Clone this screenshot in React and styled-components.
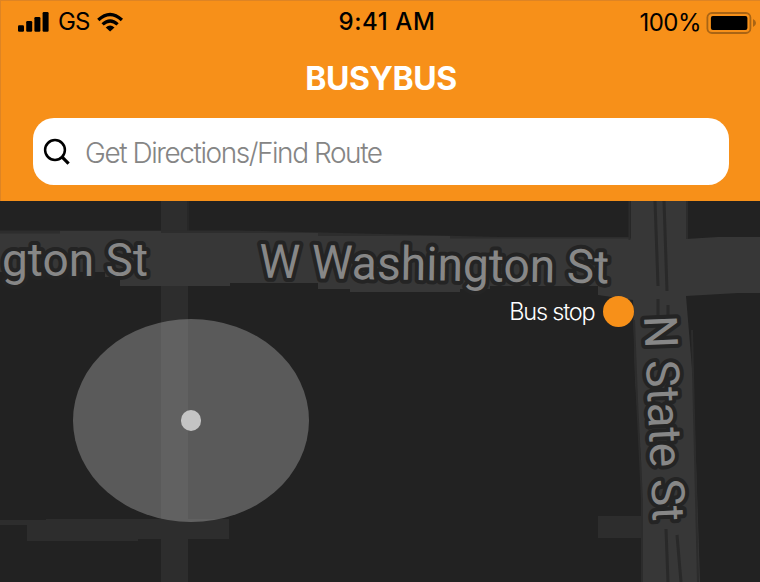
import React from "react";
import styled, { createGlobalStyle } from "styled-components";

const Global = createGlobalStyle`
  * { box-sizing: border-box; }
  body { margin: 0; background: #222; }
`;

const Screen = styled.div`
  width: 760px;
  height: 582px;
  display: flex;
  flex-direction: column;
  overflow: hidden;
  font-family: Inter, "Liberation Sans", sans-serif;
`;

const Header = styled.header`
  height: 201px;
  flex: none;
  display: flex;
  flex-direction: column;
  background: #f79019;
  box-shadow: inset 1px 1px 0 #de8424;
`;

const StatusBar = styled.div`
  height: 43px;
  display: grid;
  grid-template-columns: 1fr auto 1fr;
  color: #000;
  white-space: nowrap;
`;

const Carrier = styled.div`
  display: flex;
  align-items: flex-start;
  padding-left: 18px;
`;

const CarrierName = styled.span`
  font-size: 24px;
  line-height: 30px;
  font-weight: 400;
  letter-spacing: -0.9px;
  margin: 7px 7px 0 9px;
`;

const Clock = styled.time`
  font-size: 24px;
  line-height: 30px;
  font-weight: 500;
  letter-spacing: 0.6px;
  padding: 7px 0 0 14px;
`;

const Power = styled.div`
  display: flex;
  justify-content: flex-end;
  align-items: flex-start;
  padding-right: 3px;
`;

const PowerLevel = styled.span`
  font-size: 24px;
  line-height: 30px;
  letter-spacing: -0.5px;
  margin: 8px 5px 0 0;
`;

const StatusIcon = styled.svg`
  margin-top: 12px;
  flex: none;
`;

const Title = styled.h1`
  margin: 16px 0 0 2px;
  height: 40px;
  line-height: 40px;
  text-align: center;
  color: #fff;
  font-size: 32px;
  font-weight: 700;
  letter-spacing: -0.4px;
`;

const SearchBar = styled.div`
  margin: 19px 31px 0 32.5px;
  height: 67px;
  border-radius: 21px;
  background: #fff;
  display: flex;
  align-items: center;
  padding-left: 10.5px;
  gap: 14px;
`;

const Placeholder = styled.span`
  font-size: 28px;
  line-height: 34px;
  margin-top: 2px;
  font-weight: 300;
  letter-spacing: -1.44px;
  color: #858585;
`;

const MapView = styled.main`
  position: relative;
  flex: 1;
  background: #222;
`;

const MapCanvas = styled.svg`
  display: block;
`;

const StreetLabel = styled.text`
  font-family: Roboto, sans-serif;
  font-size: ${(p) => p.$size}px;
  fill: #878787;
  stroke: #242424;
  stroke-width: 8px;
  stroke-linejoin: round;
  paint-order: stroke;
`;

const LocationRange = styled.div`
  position: absolute;
  left: 73px;
  top: 118px;
  width: 236px;
  height: 203px;
  border-radius: 50%;
  background: rgba(196, 196, 196, 0.345);
  display: grid;
  place-items: center;
`;

const LocationDot = styled.div`
  width: 20.5px;
  height: 20.5px;
  border-radius: 50%;
  background: #c4c4c4;
`;

const StopMarker = styled.div`
  position: absolute;
  right: 126px;
  top: 95px;
  display: flex;
  align-items: center;
  gap: 8.5px;
`;

const StopName = styled.span`
  color: #fff;
  font-size: 23.5px;
  line-height: 30px;
  font-weight: 300;
  letter-spacing: -1.2px;
  white-space: nowrap;
`;

const StopDot = styled.span`
  width: 31px;
  height: 31px;
  border-radius: 50%;
  background: #f79019;
`;

function Signal() {
  return (
    <StatusIcon width="31" height="20" viewBox="0 0 31 20">
      <rect x="0" y="13.2" width="6" height="6.5" rx="1.2" />
      <rect x="8.2" y="9" width="6" height="10.7" rx="1.2" />
      <rect x="16.4" y="5" width="6" height="14.7" rx="1.2" />
      <rect x="24.6" y="0" width="6" height="19.7" rx="1.2" />
    </StatusIcon>
  );
}

function Wifi() {
  return (
    <StatusIcon width="28" height="20" viewBox="0 0 28 20">
      <g fill="none" stroke="#000" strokeWidth="3.3">
        <path d="M1.3 8 Q13.100 -3 24.900 8" />
        <path d="M5.6 12.4 Q13.100 5.5 20.600 12.4" />
      </g>
      <path d="M8.700 15.4 Q13.100 11.400 17.500 15.4 L13.100 19.6 Z" />
    </StatusIcon>
  );
}

function Battery() {
  return (
    <StatusIcon width="51" height="22" viewBox="0 0 51 22">
      <rect x="1.4" y="1" width="43" height="20" rx="4.5" fill="none" stroke="#a96414" strokeWidth="1.8" />
      <rect x="4.9" y="4" width="36.5" height="14" rx="2" />
      <path d="M47 7 Q50 8.3 50 11 Q50 13.7 47 15 Z" fill="#a96414" />
    </StatusIcon>
  );
}

function SearchIcon() {
  return (
    <svg width="28" height="28" viewBox="0 0 28 28" fill="none" stroke="#000">
      <circle cx="12" cy="12" r="9.9" strokeWidth="2.5" />
      <path d="M18.7 18.7 L25.6 25.6" strokeWidth="3.2" />
    </svg>
  );
}

function CityMap() {
  return (
    <MapCanvas width="760" height="381" viewBox="0 201 760 381">
      <g fill="#2d2d2d">
        <rect x="161" y="201" width="27" height="381" />
        <rect x="187" y="201" width="2" height="31" fill="#272727" />
        <path d="M0 520 H46 V519 H229 V539 H138 V541 H27 V525 H0 Z" />
        <rect x="598" y="516" width="46" height="22" />
        <path d="M0 230.500 H240 L500 237 H630 V240 H0 Z" />
      </g>
      <g fill="#373737">
        <path d="M0 233.500 H60 V231 H161 V233 H318 V236 H450 V238.500 H631 V240 H686 V239 L718 237 H760 V293 H738 L686 296 L693 380 L696 460 L700 582 H643 L641 460 L635 380 L633 300 L598 295 V290 H470 V292 H350 V289 H318 V283 H230 V286 H120 V283 H0 Z" />
        <path d="M631 201 H686 V245 H631 Z" />
      </g>
      <path d="M0 272 H105 V277 H120 V290 H0 Z M350 292 H460 V289 H490 V286 H598 V300 H350 Z" fill="#222" />
      <path d="M629.500 201 V240 M687 201 V239 M634 320 L637 400 L642 500 V582 M692 330 L698 582" fill="none" stroke="#2c2c2c" strokeWidth="2" />
      <g fill="none" stroke="#292929" strokeWidth="3">
        <path d="M655 201 L658 286 M664 201 L667 291 M658 299 V322 M668 305 V322" />
        <path d="M666 529 L668 582 M677 535 L681 582" />
      </g>
      <StreetLabel $size={46} x="2" y="276" textLength="146" lengthAdjust="spacingAndGlyphs">gton St</StreetLabel>
      <StreetLabel $size={47} x="259" y="277.5" textLength="350" lengthAdjust="spacingAndGlyphs" transform="rotate(0.95 259 277)">W Washington St</StreetLabel>
      <StreetLabel $size={46} x="645" y="317" textLength="206" lengthAdjust="spacingAndGlyphs" transform="rotate(87.500 645 316)">N State St</StreetLabel>
    </MapCanvas>
  );
}

export default function App() {
  return (
    <Screen>
      <Global />
      <Header>
        <StatusBar>
          <Carrier>
            <Signal />
            <CarrierName>GS</CarrierName>
            <Wifi />
          </Carrier>
          <Clock>9:41 AM</Clock>
          <Power>
            <PowerLevel>100%</PowerLevel>
            <Battery />
          </Power>
        </StatusBar>
        <Title>BUSYBUS</Title>
        <SearchBar>
          <SearchIcon />
          <Placeholder>Get Directions/Find Route</Placeholder>
        </SearchBar>
      </Header>
      <MapView>
        <CityMap />
        <LocationRange>
          <LocationDot />
        </LocationRange>
        <StopMarker>
          <StopName>Bus stop</StopName>
          <StopDot />
        </StopMarker>
      </MapView>
    </Screen>
  );
}
